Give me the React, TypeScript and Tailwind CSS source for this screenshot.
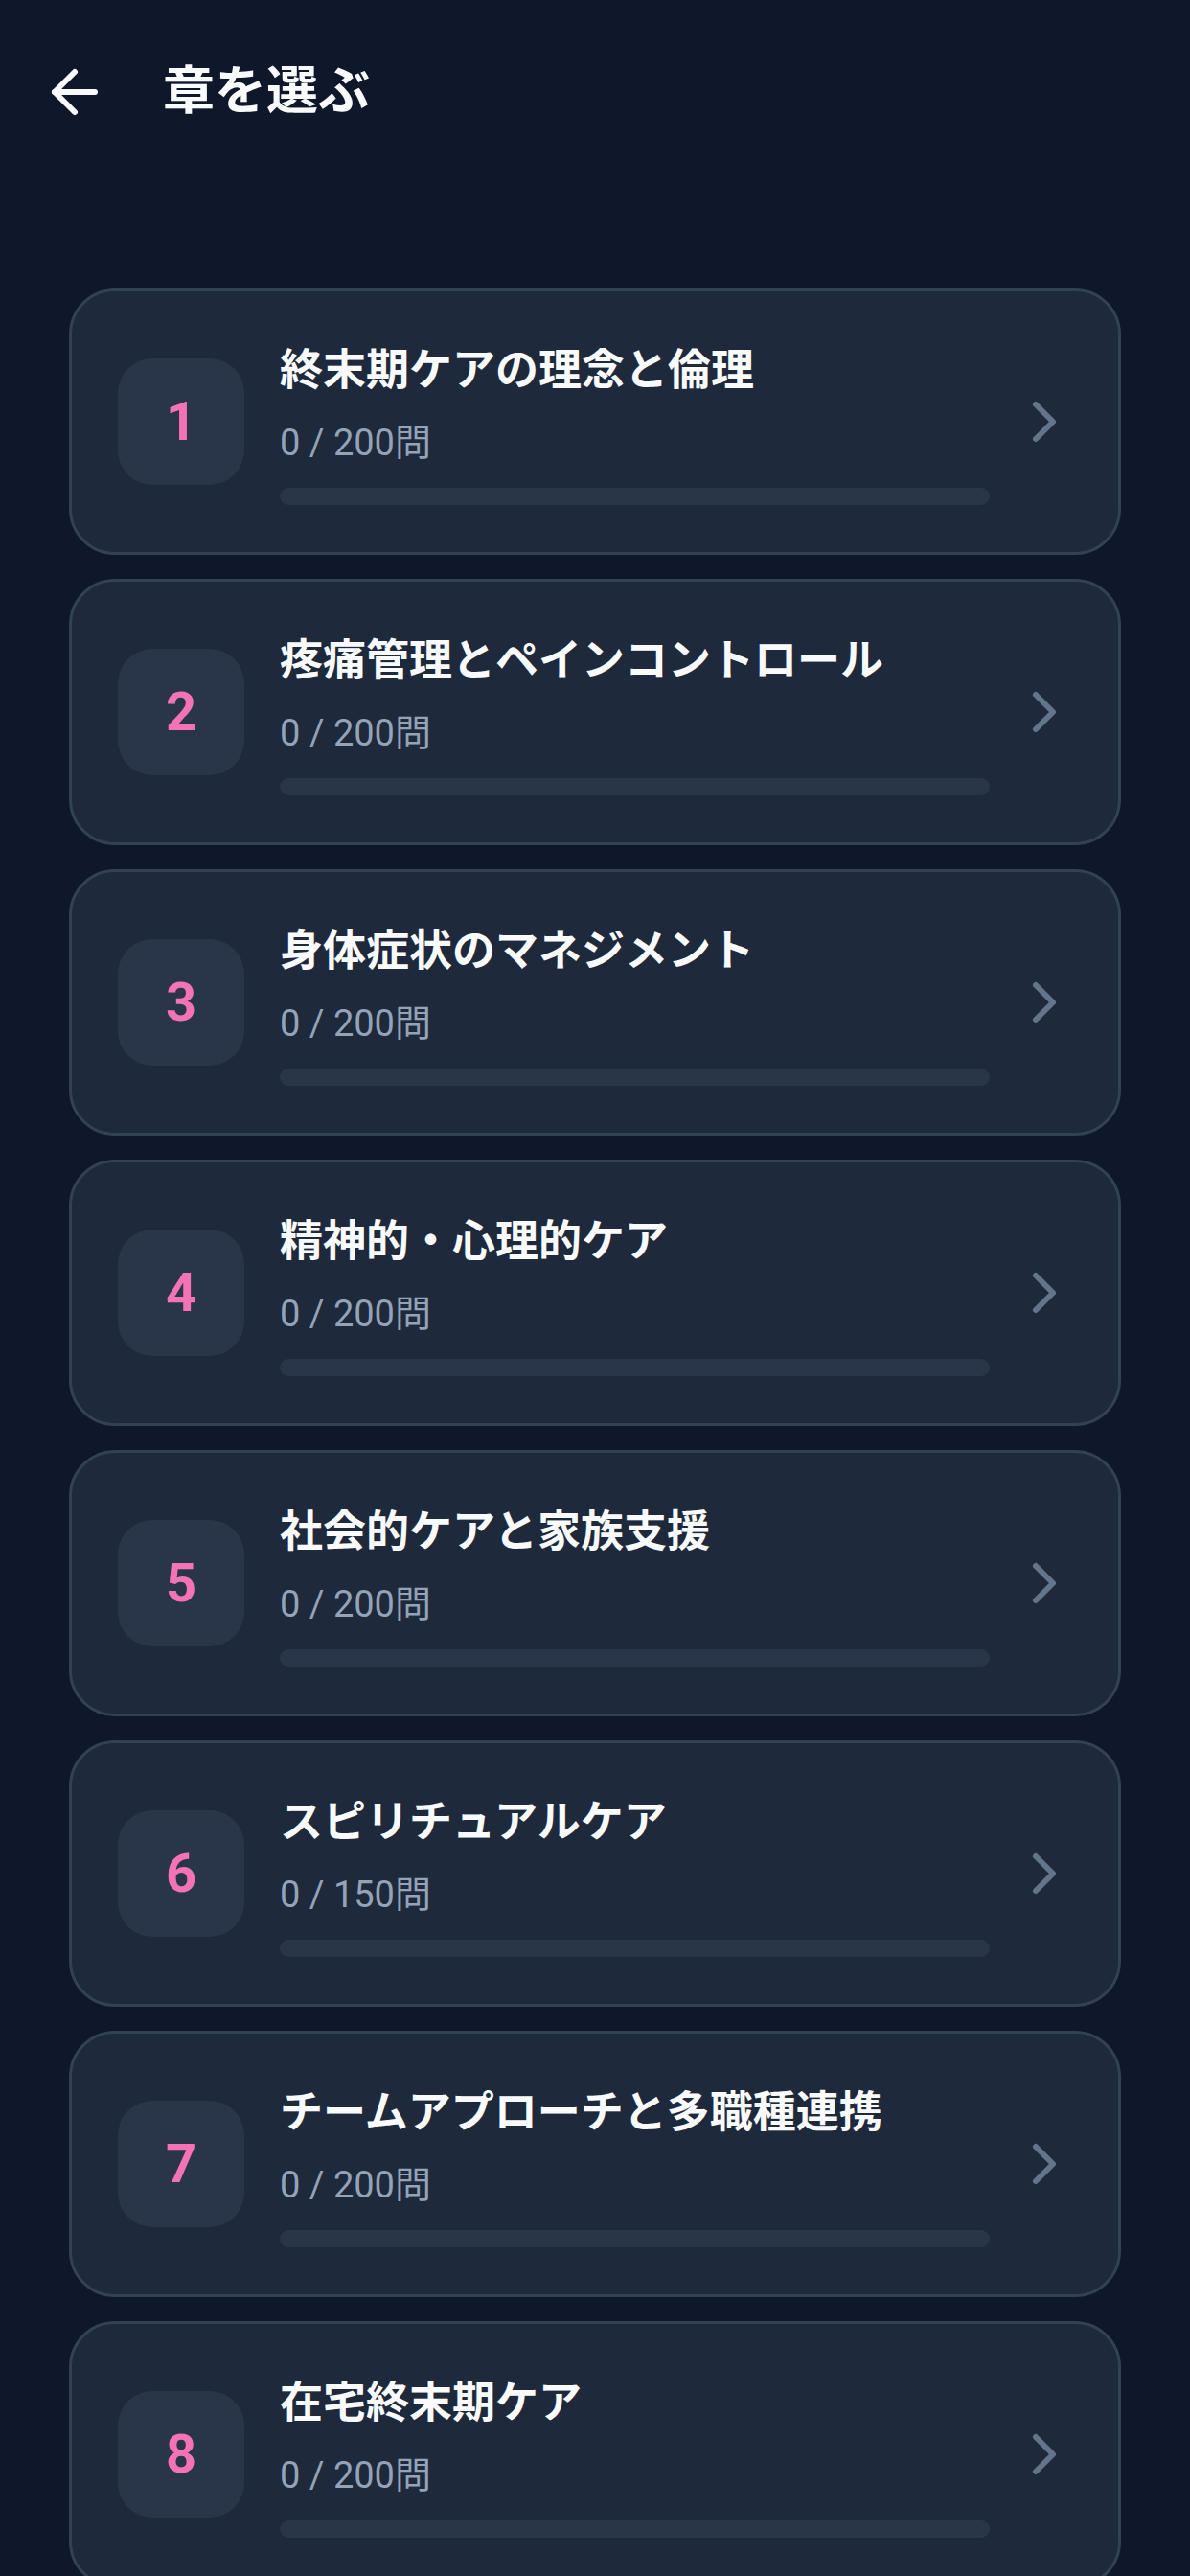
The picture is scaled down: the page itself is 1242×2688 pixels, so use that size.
import React from 'react';
import { ArrowLeft, ChevronRight } from 'lucide-react';

type Chapter = {
  id: number;
  title: string;
  done: number;
  total: number;
};

const chapters: Chapter[] = [
  { id: 1, title: '終末期ケアの理念と倫理', done: 0, total: 200 },
  { id: 2, title: '疼痛管理とペインコントロール', done: 0, total: 200 },
  { id: 3, title: '身体症状のマネジメント', done: 0, total: 200 },
  { id: 4, title: '精神的・心理的ケア', done: 0, total: 200 },
  { id: 5, title: '社会的ケアと家族支援', done: 0, total: 200 },
  { id: 6, title: 'スピリチュアルケア', done: 0, total: 150 },
  { id: 7, title: 'チームアプローチと多職種連携', done: 0, total: 200 },
  { id: 8, title: '在宅終末期ケア', done: 0, total: 200 },
];

const ChapterCard = ({ chapter }: { chapter: Chapter }) => {
  const pct = chapter.total ? (chapter.done / chapter.total) * 100 : 0;

  return (
    <button className="flex h-[278px] w-full shrink-0 items-center rounded-[48px] border-[3px] border-[#334155] bg-[#1e293b] pl-[48px] pr-[41px] text-left">
      <div className="flex h-[132px] w-[132px] shrink-0 items-center justify-center rounded-[36px] bg-[#293548]">
        <span className="text-[56px] font-bold leading-none text-[#f472b6]">{chapter.id}</span>
      </div>

      <div className="ml-[37px] flex min-w-0 flex-1 flex-col pt-[4px]">
        <h2 className="truncate text-[45px] font-bold leading-[60px] text-[#f8fafc]">{chapter.title}</h2>
        <p className="mt-[18px] text-[38px] leading-[54px] text-[#94a3b8]">
          {chapter.done} / {chapter.total}問
        </p>
        <div className="mt-[20px] h-[18px] w-full overflow-hidden rounded-full bg-[#293548]">
          <div className="h-full rounded-full bg-[#f472b6]" style={{ width: `${pct}%` }} />
        </div>
      </div>

      <div className="ml-[21px] shrink-0 text-[#64748b]">
        <ChevronRight size={72} strokeWidth={2} />
      </div>
    </button>
  );
};

const App = () => {
  return (
    <div
      className="h-screen w-full overflow-hidden bg-[#0f172a] pt-[60px] text-white"
      style={{ fontFamily: "Roboto, 'Noto Sans CJK JP', sans-serif" }}
    >
      <header className="flex h-[72px] items-center pl-[42px]">
        <button className="flex h-[72px] w-[72px] items-center justify-center text-[#f8fafc]">
          <ArrowLeft size={72} strokeWidth={2} />
        </button>
        <h1 className="ml-[56px] text-[54px] font-bold leading-none text-[#f8fafc]">章を選ぶ</h1>
      </header>

      <main className="mt-[169px] flex flex-col gap-[25px] px-[72px] pb-[72px]">
        {chapters.map((c) => (
          <ChapterCard key={c.id} chapter={c} />
        ))}
      </main>
    </div>
  );
};

export default App;
